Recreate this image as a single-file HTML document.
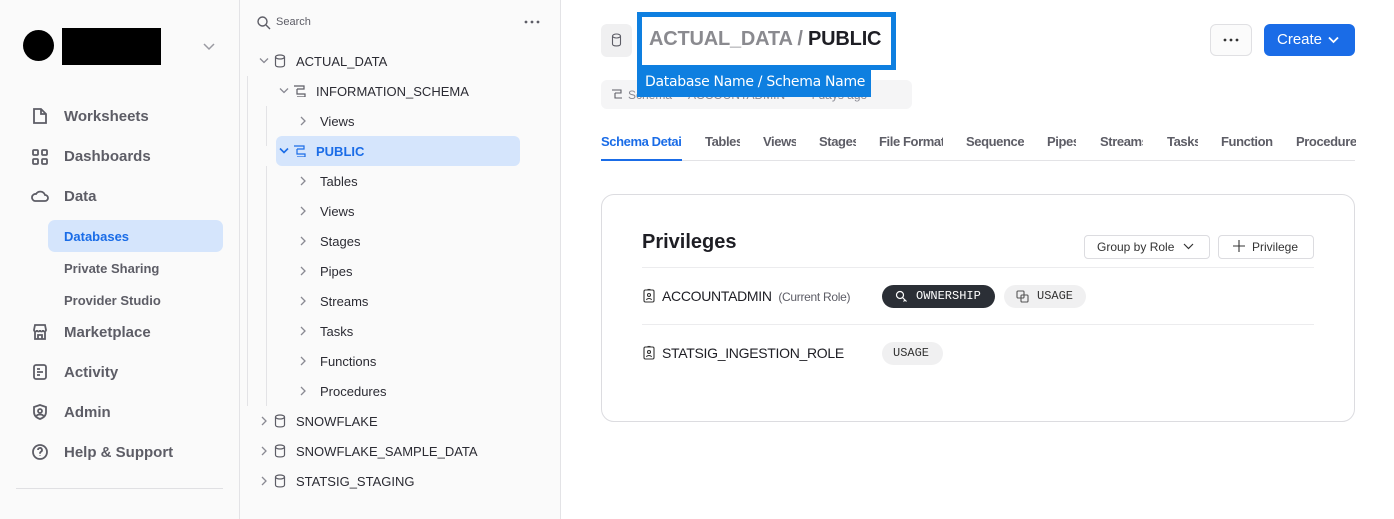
<!DOCTYPE html>
<html><head><meta charset="utf-8"><style>
*{box-sizing:border-box;margin:0;padding:0}
body{width:1394px;height:519px;overflow:hidden;background:#fff;font-family:"Liberation Sans",sans-serif;position:relative;color:#1e1e24}
.a{position:absolute;white-space:nowrap}
#nav{left:0;top:0;width:240px;height:519px;background:#fafafa;border-right:1px solid #e3e3e6}
#tree{left:240px;top:0;width:321px;height:519px;background:#fafafa;border-right:1px solid #e3e3e6}
.ni{font-size:15px;font-weight:bold;color:#5d5d66}
.si{font-size:13px;font-weight:bold;color:#5d5d66}
.t{font-size:13px;color:#2b2b33}
svg{position:absolute}
.tab{font-size:13px;font-weight:bold;color:#5d5d66;top:134px;overflow:hidden;letter-spacing:-0.4px}
.pill{position:absolute;height:23px;border-radius:12px;font-family:"Liberation Mono",monospace;font-size:12px;line-height:23px;padding:0 11px}
</style></head><body>
<div id="nav" class="a">
 <div class="a" style="left:23px;top:30px;width:31px;height:31px;border-radius:50%;background:#000"></div>
 <div class="a" style="left:62px;top:28px;width:99px;height:37px;background:#000"></div>
 <svg style="left:203px;top:43px" width="12" height="8"><path d="M1 1l5 5 5-5" stroke="#9a9aa2" fill="none" stroke-width="1.5"/></svg>
 <svg style="left:31px;top:107px" width="18" height="18" fill="none" stroke="#5d5d66" stroke-width="1.8"><path d="M3 2h7l5 5v9H3z M10 2v5h5"/></svg>
 <div class="a ni" style="left:64px;top:108px">Worksheets</div>
 <svg style="left:31px;top:148px" width="18" height="18" fill="none" stroke="#5d5d66" stroke-width="1.8"><rect x="2" y="2" width="5" height="5" rx="1"/><rect x="11" y="2" width="5" height="5" rx="1"/><rect x="2" y="11" width="5" height="5" rx="1"/><rect x="11" y="11" width="5" height="5" rx="1"/></svg>
 <div class="a ni" style="left:64px;top:148px">Dashboards</div>
 <svg style="left:30px;top:188px" width="20" height="16" fill="none" stroke="#5d5d66" stroke-width="1.8"><path d="M5 13h10a3 3 0 0 0 0-6 5 5 0 0 0-9-1 3.5 3.5 0 0 0-1 7z"/></svg>
 <div class="a ni" style="left:64px;top:188px">Data</div>
 <div class="a" style="left:48px;top:220px;width:175px;height:32px;border-radius:7px;background:#d5e5fc"></div>
 <div class="a si" style="left:64px;top:229px;color:#1a6ce7">Databases</div>
 <div class="a si" style="left:64px;top:261px">Private Sharing</div>
 <div class="a si" style="left:64px;top:293px">Provider Studio</div>
 <svg style="left:31px;top:323px" width="18" height="18" fill="none" stroke="#5d5d66" stroke-width="1.8"><path d="M3 7l1-5h10l1 5c0 2-3 2-3 0 0 2-3 2-3 0 0 2-3 2-3 0 0 2-3 2-3 0z M4 9v7h10V9 M7 16v-4h4v4"/></svg>
 <div class="a ni" style="left:64px;top:324px">Marketplace</div>
 <svg style="left:31px;top:363px" width="18" height="18" fill="none" stroke="#5d5d66" stroke-width="1.8"><rect x="3" y="2" width="12" height="14" rx="2"/><path d="M6 6h3M6 9h6M6 12h3"/></svg>
 <div class="a ni" style="left:64px;top:364px">Activity</div>
 <svg style="left:31px;top:403px" width="18" height="18" fill="none" stroke="#5d5d66" stroke-width="1.8"><path d="M9 2l6 2v5c0 4-3 6-6 7-3-1-6-3-6-7V4z"/><circle cx="9" cy="8" r="2"/><path d="M5.5 13c1-2 6-2 7 0"/></svg>
 <div class="a ni" style="left:64px;top:404px">Admin</div>
 <svg style="left:31px;top:443px" width="18" height="18" fill="none" stroke="#5d5d66" stroke-width="1.8"><circle cx="9" cy="9" r="7"/><path d="M7 7a2 2 0 1 1 3 1.7c-1 .5-1 1-1 2M9 12.5v.5"/></svg>
 <div class="a ni" style="left:64px;top:444px">Help &amp; Support</div>
 <div class="a" style="left:16px;top:488px;width:207px;height:1px;background:#e0e0e3"></div>
</div>
<div id="tree" class="a">
 <svg style="left:17px;top:16px" width="14" height="14" fill="none" stroke="#5d5d66" stroke-width="1.4"><circle cx="5.5" cy="5.5" r="4.5"/><path d="M9 9l4 4"/></svg>
 <div class="a" style="left:36px;top:16px;font-size:11px;color:#5d5d66">Search</div>
 <svg style="left:284px;top:20px" width="16" height="4" fill="#5d5d66"><circle cx="2" cy="2" r="1.4"/><circle cx="8" cy="2" r="1.4"/><circle cx="14" cy="2" r="1.4"/></svg>
 <div class="a" style="left:7px;top:76px;width:1px;height:330px;background:#e3e3e6"></div>
 <div class="a" style="left:26px;top:106px;width:1px;height:40px;background:#e3e3e6"></div>
 <div class="a" style="left:26px;top:166px;width:1px;height:240px;background:#e3e3e6"></div>
 <div class="a" style="left:36px;top:136px;width:244px;height:30px;border-radius:6px;background:#d5e5fc"></div>
</div>
<!-- tree rows -->
<svg style="left:259px;top:57px" width="10" height="8"><path d="M1 1.5l4 4 4-4" stroke="#8a8a93" fill="none" stroke-width="1.3"/></svg>
<svg style="left:274px;top:54px" width="12" height="14" fill="none" stroke="#5d5d66" stroke-width="1.2"><ellipse cx="6" cy="3" rx="4.5" ry="2"/><path d="M1.5 3v8c0 2.6 9 2.6 9 0V3"/></svg>
<div class="a t" style="left:296px;top:54px">ACTUAL_DATA</div>
<svg style="left:279px;top:87px" width="10" height="8"><path d="M1 1.5l4 4 4-4" stroke="#8a8a93" fill="none" stroke-width="1.3"/></svg>
<svg style="left:293px;top:85px" width="14" height="12" fill="none" stroke="#5d5d66" stroke-width="1.2"><path d="M1 1h10v3H4M4 4v5h8v3H4"/></svg>
<div class="a t" style="left:316px;top:84px">INFORMATION_SCHEMA</div>
<svg style="left:300px;top:116px" width="6" height="10"><path d="M1 1l4 4-4 4" stroke="#8a8a93" fill="none" stroke-width="1.3"/></svg><div class="a t" style="left:320px;top:114px">Views</div>
<svg style="left:279px;top:147px" width="10" height="8"><path d="M1 1.5l4 4 4-4" stroke="#1a6ce7" fill="none" stroke-width="1.6"/></svg>
<svg style="left:293px;top:145px" width="14" height="12" fill="none" stroke="#1a6ce7" stroke-width="1.2"><path d="M1 1h10v3H4M4 4v5h8v3H4"/></svg>
<div class="a t" style="left:316px;top:144px;color:#1a6ce7;font-weight:bold">PUBLIC</div>
<svg style="left:300px;top:176px" width="6" height="10"><path d="M1 1l4 4-4 4" stroke="#8a8a93" fill="none" stroke-width="1.3"/></svg><div class="a t" style="left:320px;top:174px">Tables</div>
<svg style="left:300px;top:206px" width="6" height="10"><path d="M1 1l4 4-4 4" stroke="#8a8a93" fill="none" stroke-width="1.3"/></svg><div class="a t" style="left:320px;top:204px">Views</div>
<svg style="left:300px;top:236px" width="6" height="10"><path d="M1 1l4 4-4 4" stroke="#8a8a93" fill="none" stroke-width="1.3"/></svg><div class="a t" style="left:320px;top:234px">Stages</div>
<svg style="left:300px;top:266px" width="6" height="10"><path d="M1 1l4 4-4 4" stroke="#8a8a93" fill="none" stroke-width="1.3"/></svg><div class="a t" style="left:320px;top:264px">Pipes</div>
<svg style="left:300px;top:296px" width="6" height="10"><path d="M1 1l4 4-4 4" stroke="#8a8a93" fill="none" stroke-width="1.3"/></svg><div class="a t" style="left:320px;top:294px">Streams</div>
<svg style="left:300px;top:326px" width="6" height="10"><path d="M1 1l4 4-4 4" stroke="#8a8a93" fill="none" stroke-width="1.3"/></svg><div class="a t" style="left:320px;top:324px">Tasks</div>
<svg style="left:300px;top:356px" width="6" height="10"><path d="M1 1l4 4-4 4" stroke="#8a8a93" fill="none" stroke-width="1.3"/></svg><div class="a t" style="left:320px;top:354px">Functions</div>
<svg style="left:300px;top:386px" width="6" height="10"><path d="M1 1l4 4-4 4" stroke="#8a8a93" fill="none" stroke-width="1.3"/></svg><div class="a t" style="left:320px;top:384px">Procedures</div>
<svg style="left:261px;top:416px" width="6" height="10"><path d="M1 1l4 4-4 4" stroke="#8a8a93" fill="none" stroke-width="1.3"/></svg>
<svg style="left:274px;top:414px" width="12" height="14" fill="none" stroke="#5d5d66" stroke-width="1.2"><ellipse cx="6" cy="3" rx="4.5" ry="2"/><path d="M1.5 3v8c0 2.6 9 2.6 9 0V3"/></svg>
<div class="a t" style="left:296px;top:414px">SNOWFLAKE</div>
<svg style="left:261px;top:446px" width="6" height="10"><path d="M1 1l4 4-4 4" stroke="#8a8a93" fill="none" stroke-width="1.3"/></svg>
<svg style="left:274px;top:444px" width="12" height="14" fill="none" stroke="#5d5d66" stroke-width="1.2"><ellipse cx="6" cy="3" rx="4.5" ry="2"/><path d="M1.5 3v8c0 2.6 9 2.6 9 0V3"/></svg>
<div class="a t" style="left:296px;top:444px">SNOWFLAKE_SAMPLE_DATA</div>
<svg style="left:261px;top:476px" width="6" height="10"><path d="M1 1l4 4-4 4" stroke="#8a8a93" fill="none" stroke-width="1.3"/></svg>
<svg style="left:274px;top:474px" width="12" height="14" fill="none" stroke="#5d5d66" stroke-width="1.2"><ellipse cx="6" cy="3" rx="4.5" ry="2"/><path d="M1.5 3v8c0 2.6 9 2.6 9 0V3"/></svg>
<div class="a t" style="left:296px;top:474px">STATSIG_STAGING</div>

<!-- main -->
<div class="a" style="left:601px;top:24px;width:31px;height:33px;border-radius:6px;background:#f0f0f1"></div>
<svg style="left:611px;top:33px" width="11" height="14" fill="none" stroke="#5d5d66" stroke-width="1.1"><ellipse cx="5.5" cy="3" rx="4" ry="2"/><path d="M1.5 3v8c0 2.6 8 2.6 8 0V3"/></svg>
<div class="a" style="left:637px;top:12px;width:259px;height:58px;border:5px solid #0e7fe0;background:#fff"></div>
<div class="a" style="left:649px;top:28px;font-size:20px;font-weight:bold;color:#8a8a8f;letter-spacing:-0.2px">ACTUAL_DATA / <span style="color:#1e1e24">PUBLIC</span></div>
<div class="a" style="left:601px;top:80px;width:311px;height:29px;border-radius:6px;background:#f5f5f6"></div>
<div class="a" style="left:628px;top:88px;font-size:12px;color:#8a8a93">Schema &nbsp; &nbsp; ACCOUNTADMIN &nbsp; &nbsp; &nbsp; 4 days ago</div>
<svg style="left:611px;top:89px" width="12" height="11" fill="none" stroke="#5d5d66" stroke-width="1.1"><path d="M1 1h9v3H4M4 4v5h7"/></svg>
<div class="a" style="left:637px;top:68px;width:234px;height:29px;background:#0e7fe0;color:#fff;font-size:14px;line-height:28px;padding-left:8px;font-family:'DejaVu Sans',sans-serif;letter-spacing:-0.3px">Database Name / Schema Name</div>
<div class="a" style="left:1210px;top:24px;width:42px;height:32px;border:1px solid #e0e0e3;border-radius:6px;background:#fbfbfb"></div>
<svg style="left:1223px;top:38px" width="16" height="4" fill="#333"><circle cx="2" cy="2" r="1.4"/><circle cx="8" cy="2" r="1.4"/><circle cx="14" cy="2" r="1.4"/></svg>
<div class="a" style="left:1264px;top:24px;width:91px;height:32px;border-radius:6px;background:#1a6ce7;color:#fff;font-size:15px;line-height:32px;padding-left:13px">Create</div>
<svg style="left:1328px;top:36px" width="11" height="8"><path d="M1 1.5l4.5 4.5 4.5-4.5" stroke="#fff" fill="none" stroke-width="1.8"/></svg>

<div class="a tab" style="left:601px;width:81px;color:#1a6ce7">Schema Detai</div>
<div class="a tab" style="left:705px;width:35px">Tables</div>
<div class="a tab" style="left:763px;width:33px">Views</div>
<div class="a tab" style="left:819px;width:37px">Stages</div>
<div class="a tab" style="left:879px;width:64px">File Format</div>
<div class="a tab" style="left:966px;width:58px">Sequence</div>
<div class="a tab" style="left:1047px;width:29px">Pipes</div>
<div class="a tab" style="left:1100px;width:43px">Streams</div>
<div class="a tab" style="left:1167px;width:31px">Tasks</div>
<div class="a tab" style="left:1221px;width:52px">Function</div>
<div class="a tab" style="left:1296px;width:60px">Procedure</div>
<div class="a" style="left:601px;top:160px;width:754px;height:1px;background:#e3e3e6"></div>
<div class="a" style="left:601px;top:159px;width:81px;height:2px;background:#1a6ce7"></div>

<div class="a" style="left:601px;top:194px;width:754px;height:228px;border:1px solid #dcdce0;border-radius:13px"></div>
<div class="a" style="left:642px;top:231px;font-size:20px;font-weight:bold;color:#1e1e24">Privileges</div>
<div class="a" style="left:1084px;top:235px;width:126px;height:24px;border:1px solid #dcdce0;border-radius:4px;font-size:12px;line-height:22px;padding-left:12px;color:#333">Group by Role</div>
<svg style="left:1183px;top:243px" width="11" height="7"><path d="M1 1l4.5 4.5 4.5-4.5" stroke="#333" fill="none" stroke-width="1.2"/></svg>
<div class="a" style="left:1218px;top:235px;width:96px;height:24px;border:1px solid #dcdce0;border-radius:4px;font-size:12px;line-height:22px;padding-left:33px;color:#333">Privilege</div>
<svg style="left:1233px;top:240px" width="12" height="12"><path d="M6 0v12M0 6h12" stroke="#333" stroke-width="1.1"/></svg>
<div class="a" style="left:642px;top:267px;width:672px;height:1px;background:#ececee"></div>
<div class="a" style="left:642px;top:324px;width:672px;height:1px;background:#ececee"></div>
<svg style="left:643px;top:288px" width="12" height="15" fill="none" stroke="#333" stroke-width="1.1"><rect x="1" y="2" width="10" height="12" rx="1.5"/><path d="M4.5 1.5h3"/><circle cx="6" cy="7" r="1.5"/><path d="M3.5 12c.5-2 4.5-2 5 0"/></svg>
<div class="a" style="left:662px;top:288px;font-size:14px;color:#1e1e24;letter-spacing:-0.3px">ACCOUNTADMIN <span style="font-size:12px;color:#5d5d66">&nbsp;(Current Role)</span></div>
<div class="pill" style="left:882px;top:285px;width:113px;background:#2b2f36;color:#fff;padding-left:34px">OWNERSHIP</div>
<svg style="left:895px;top:290px" width="14" height="13" fill="none" stroke="#fff" stroke-width="1.2"><circle cx="5" cy="5" r="3.5"/><path d="M7.5 7.5l4 4M10 10l-1.5 1.5"/></svg>
<div class="pill" style="left:1004px;top:285px;width:82px;background:#f0f0f1;color:#333;padding-left:33px">USAGE</div>
<svg style="left:1016px;top:290px" width="14" height="13" fill="none" stroke="#555" stroke-width="1.1"><rect x="1" y="1" width="7" height="7" rx="1"/><rect x="5" y="5" width="7" height="7" rx="1"/></svg>
<svg style="left:643px;top:345px" width="12" height="15" fill="none" stroke="#333" stroke-width="1.1"><rect x="1" y="2" width="10" height="12" rx="1.5"/><path d="M4.5 1.5h3"/><circle cx="6" cy="7" r="1.5"/><path d="M3.5 12c.5-2 4.5-2 5 0"/></svg>
<div class="a" style="left:662px;top:345px;font-size:14px;color:#1e1e24;letter-spacing:-0.3px">STATSIG_INGESTION_ROLE</div>
<div class="pill" style="left:882px;top:342px;width:61px;background:#f0f0f1;color:#333">USAGE</div>
</body></html>
